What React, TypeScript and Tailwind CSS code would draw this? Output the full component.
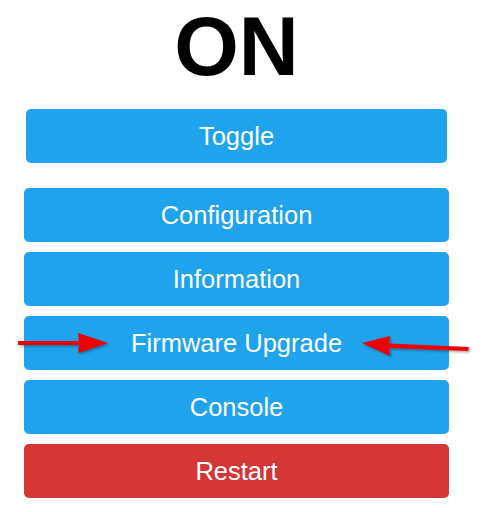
import React from 'react';

const font = { fontFamily: '"Liberation Sans", Arial, sans-serif' };

function Btn({ label, red = false }: { label: string; red?: boolean }) {
  return (
    <div
      className={`flex h-[54px] w-full items-center justify-center rounded-[5px] text-[25.5px] text-white ${
        red ? 'bg-[#d43535]' : 'bg-[#1fa3ec]'
      }`}
    >
      {label}
    </div>
  );
}

function Arrows() {
  return (
    <svg className="pointer-events-none absolute left-0 top-[326px]" width="483" height="40" viewBox="0 326 483 40">
      <defs>
        <filter id="sh" x="-10%" y="-50%" width="120%" height="200%">
          <feDropShadow dx="1.5" dy="1.5" stdDeviation="1" floodColor="#000" floodOpacity="0.35" />
        </filter>
      </defs>
      <g fill="#ee0000" filter="url(#sh)">
        <polygon points="18,341 79,341 78,333 108,343 78,353 79,345 18,345" />
        <polygon points="362,343 390,336 389,343.5 469,347 468,351 389,348 390,356" />
      </g>
    </svg>
  );
}

export default function App() {
  return (
    <div className="relative h-[512px] w-[483px] bg-white" style={font}>
      <div className="ml-[24px] w-[425px] pt-[5px]">
        <div className="text-center text-[83px] font-bold leading-[83px] text-black">ON</div>
        <div className="mx-[2px] mt-[21px]">
          <Btn label="Toggle" />
        </div>
        <div className="mt-[25px] flex flex-col gap-[10px]">
          <Btn label="Configuration" />
          <Btn label="Information" />
          <Btn label="Firmware Upgrade" />
          <Btn label="Console" />
          <Btn label="Restart" red />
        </div>
      </div>
      <Arrows />
    </div>
  );
}
